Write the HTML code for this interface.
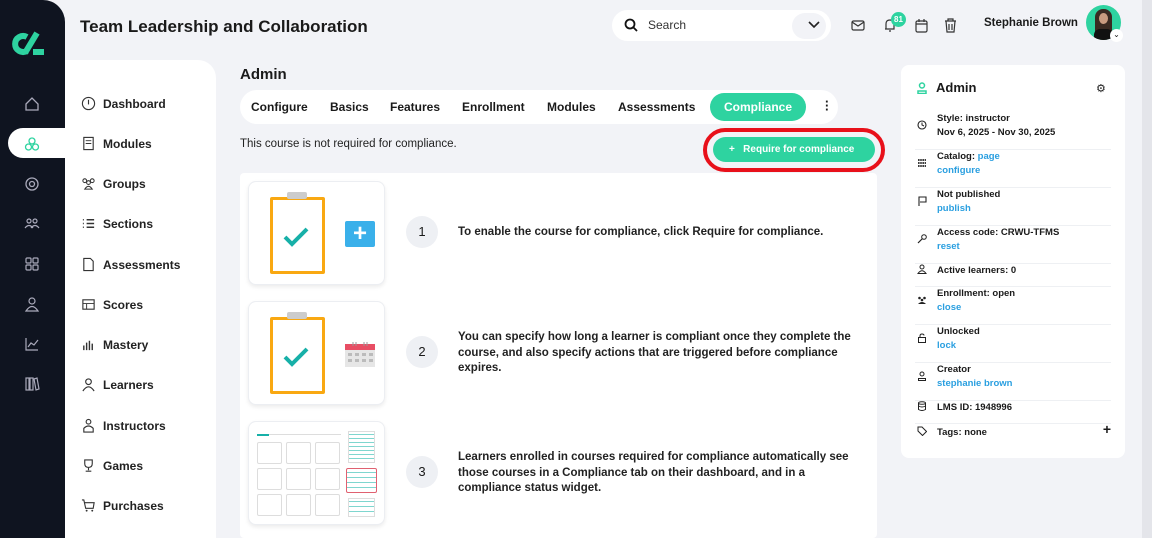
<!DOCTYPE html>
<html><head><meta charset="utf-8"><style>
*{box-sizing:border-box;margin:0;padding:0}
body{width:1152px;height:538px;overflow:hidden;background:#f2f3f7;font-family:"Liberation Sans",sans-serif;color:#1a1a1a;position:relative}
.abs{position:absolute}
.side{left:0;top:0;width:65px;height:538px;background:#0f1420;border-top-right-radius:22px}
.ic{position:absolute;left:24px;width:16px;height:16px}
.nav2{left:65px;top:60px;width:151px;height:478px;background:#fff;border-top-right-radius:18px}
.nav2 div{position:absolute;left:16px;font-size:12px;font-weight:bold;color:#222;display:flex;align-items:center;gap:7px}
.nav2 svg{width:15px;height:15px}
.tabs{left:240px;top:90px;width:598px;height:34px;background:#fff;border-radius:17px}
.tabs span{position:absolute;top:10px;font-size:12px;font-weight:bold}
.card{position:absolute;left:248px;width:137px;height:104px;background:#fff;border:1px solid #eceef2;border-radius:8px;box-shadow:0 2px 4px rgba(0,0,0,.08)}
.num{position:absolute;left:406px;width:32px;height:32px;border-radius:50%;background:#eef0f4;font-size:13px;text-align:center;line-height:32px}
.st{position:absolute;left:458px;font-size:11.5px;font-weight:bold;line-height:15.5px;color:#222;width:400px}
.rp{left:901px;top:65px;width:224px;height:393px;background:#fff;border-radius:8px}
.row{position:absolute;left:14px;width:196px;border-bottom:1px solid #eef0f3;font-size:9.5px;font-weight:bold;line-height:14px}
.row .t{position:absolute;left:22px}
.row svg{position:absolute;left:2px;width:10px;height:10px}
a{color:#2a9fe0;text-decoration:none}
</style></head><body>
<div class="abs side">
<svg class="abs" style="left:12px;top:31px" width="34" height="26" viewBox="0 0 34 26"><path d="M15 6 A8 8 0 1 0 15 20" fill="none" stroke="#2ed3a0" stroke-width="6"/><path d="M25 2 L13 22" stroke="#2ed3a0" stroke-width="6"/><rect x="21" y="18" width="11" height="6" fill="#2ed3a0"/></svg>
<svg class="ic" style="top:96px" viewBox="0 0 16 16"><path d="M2 8 L8 2 L14 8 V14 H2Z" fill="none" stroke="#aab" stroke-width="1.3"/></svg>
<div class="abs" style="left:8px;top:128px;width:57px;height:30px;background:#fff;border-radius:15px 0 0 15px"></div>
<svg class="ic" style="top:136px" viewBox="0 0 16 16"><g fill="none" stroke="#2ed3a0" stroke-width="1.3"><circle cx="8" cy="5" r="3"/><circle cx="4.5" cy="11" r="3"/><circle cx="11.5" cy="11" r="3"/></g></svg>
<svg class="ic" style="top:176px" viewBox="0 0 16 16"><circle cx="8" cy="8" r="6" fill="none" stroke="#aab" stroke-width="1.3"/><circle cx="8" cy="8" r="2.5" fill="none" stroke="#aab" stroke-width="1.3"/></svg>
<svg class="ic" style="top:216px" viewBox="0 0 16 16"><g fill="none" stroke="#aab" stroke-width="1.2"><circle cx="5" cy="5" r="2"/><circle cx="11" cy="5" r="2"/><path d="M1 12 Q5 7 9 12 M7 12 Q11 7 15 12"/></g></svg>
<svg class="ic" style="top:256px" viewBox="0 0 16 16"><g fill="none" stroke="#aab" stroke-width="1.2"><rect x="2" y="2" width="5" height="5" rx="1"/><rect x="9" y="2" width="5" height="5" rx="1"/><rect x="2" y="9" width="5" height="5" rx="1"/><rect x="9" y="9" width="5" height="5" rx="1"/></g></svg>
<svg class="ic" style="top:296px" viewBox="0 0 16 16"><g fill="none" stroke="#aab" stroke-width="1.2"><circle cx="8" cy="5" r="3"/><path d="M2 15 Q8 6 14 15Z"/></g></svg>
<svg class="ic" style="top:336px" viewBox="0 0 16 16"><path d="M2 2 V14 H14 M4 11 L7 7 L10 9 L14 4" fill="none" stroke="#aab" stroke-width="1.2"/></svg>
<svg class="ic" style="top:376px" viewBox="0 0 16 16"><g fill="none" stroke="#aab" stroke-width="1.2"><rect x="2" y="2" width="3" height="12"/><rect x="6" y="2" width="3" height="12"/><path d="M10 3 L13 2 L15 13 L12 14Z"/></g></svg>
</div>
<div class="abs" style="left:80px;top:17px;font-size:17px;font-weight:bold">Team Leadership and Collaboration</div>
<div class="abs nav2">
<div style="top:36px"><svg viewBox="0 0 16 16"><circle cx="8" cy="8" r="6.5" fill="none" stroke="#333" stroke-width="1.2"/><path d="M8 4V9" stroke="#333" stroke-width="1.2"/></svg>Dashboard</div>
<div style="top:76px"><svg viewBox="0 0 16 16"><rect x="3" y="1.5" width="10" height="13" fill="none" stroke="#333" stroke-width="1.2"/><path d="M5 5H11M5 8H11" stroke="#333"/></svg>Modules</div>
<div style="top:116px"><svg viewBox="0 0 16 16"><g fill="none" stroke="#333" stroke-width="1.1"><circle cx="4" cy="5" r="2"/><circle cx="12" cy="5" r="2"/><circle cx="8" cy="7" r="2"/><path d="M4 14Q8 8 12 14Z"/></g></svg>Groups</div>
<div style="top:156px"><svg viewBox="0 0 16 16"><path d="M2 4H3M2 8H3M2 12H3M6 4H14M6 8H14M6 12H14" stroke="#333" stroke-width="1.5"/></svg>Sections</div>
<div style="top:197px"><svg viewBox="0 0 16 16"><path d="M3 1.5H10L13 4.5V14.5H3Z" fill="none" stroke="#333" stroke-width="1.2"/></svg>Assessments</div>
<div style="top:237px"><svg viewBox="0 0 16 16"><rect x="2" y="3" width="12" height="10" fill="none" stroke="#333" stroke-width="1.2"/><path d="M2 7H14M6 7V13" stroke="#333"/></svg>Scores</div>
<div style="top:277px"><svg viewBox="0 0 16 16"><path d="M3 14V9M6 14V6M9 14V4M12 14V7" stroke="#333" stroke-width="1.5"/></svg>Mastery</div>
<div style="top:317px"><svg viewBox="0 0 16 16"><g fill="none" stroke="#333" stroke-width="1.2"><circle cx="8" cy="5" r="3"/><path d="M2 15Q8 6 14 15"/></g></svg>Learners</div>
<div style="top:358px"><svg viewBox="0 0 16 16"><g fill="none" stroke="#333" stroke-width="1.2"><circle cx="8" cy="4" r="2.5"/><path d="M3 15V11Q8 6 13 11V15Z"/></g></svg>Instructors</div>
<div style="top:398px"><svg viewBox="0 0 16 16"><path d="M4 2H12V6Q12 10 8 10Q4 10 4 6ZM8 10V13M5 14H11" fill="none" stroke="#333" stroke-width="1.2"/></svg>Games</div>
<div style="top:438px"><svg viewBox="0 0 16 16"><path d="M1 2H3L5 11H13L14 5H4" fill="none" stroke="#333" stroke-width="1.2"/><circle cx="6" cy="13.5" r="1" fill="#333"/><circle cx="12" cy="13.5" r="1" fill="#333"/></svg>Purchases</div>
</div>
<div class="abs" style="left:612px;top:10px;width:219px;height:31px;background:#fff;border-radius:16px"></div>
<svg class="abs" style="left:624px;top:18px" width="14" height="14" viewBox="0 0 14 14"><circle cx="6" cy="6" r="4.5" fill="none" stroke="#111" stroke-width="1.8"/><path d="M9.5 9.5L13 13" stroke="#111" stroke-width="1.8"/></svg>
<div class="abs" style="left:648px;top:18px;font-size:12px;color:#333">Search</div>
<div class="abs" style="left:792px;top:13px;width:34px;height:26px;border-radius:13px;background:#f2f3f7"></div>
<svg class="abs" style="left:808px;top:21px" width="12" height="8" viewBox="0 0 12 8"><path d="M1 1L6 6L11 1" fill="none" stroke="#222" stroke-width="1.6"/></svg>
<svg class="abs" style="left:851px;top:20px" width="14" height="11" viewBox="0 0 14 11"><rect x="1" y="1" width="12" height="9" rx="1.5" fill="none" stroke="#333" stroke-width="1.2"/><path d="M1 2L7 6L13 2" fill="none" stroke="#333" stroke-width="1.2"/></svg>
<svg class="abs" style="left:883px;top:17px" width="14" height="16" viewBox="0 0 14 16"><path d="M3 12V7Q3 3 7 3Q11 3 11 7V12H2M6 14H8" fill="none" stroke="#333" stroke-width="1.2"/></svg>
<div class="abs" style="left:891px;top:12px;width:15px;height:15px;border-radius:50%;background:#2ed3a0;color:#fff;font-size:8px;font-weight:bold;text-align:center;line-height:15px">81</div>
<svg class="abs" style="left:915px;top:18px" width="13" height="15" viewBox="0 0 13 15"><rect x="1" y="3" width="11" height="11" rx="1.5" fill="none" stroke="#333" stroke-width="1.2"/><path d="M1 6H12M4 1V4M9 1V4" stroke="#333" stroke-width="1.2"/></svg>
<svg class="abs" style="left:944px;top:18px" width="13" height="15" viewBox="0 0 13 15"><path d="M1 3H12M4 3V1H9V3M2 3L3 14H10L11 3M5 6V12M8 6V12" fill="none" stroke="#333" stroke-width="1.2"/></svg>
<div class="abs" style="left:984px;top:17px;font-size:11.5px;font-weight:bold">Stephanie Brown</div>
<div class="abs" style="left:1086px;top:5px;width:35px;height:35px;border-radius:50%;background:#2ed3a0;overflow:hidden"><div style="position:absolute;left:9px;top:4px;width:17px;height:31px;background:#3a2a22;border-radius:8px 8px 2px 2px"></div><div style="position:absolute;left:13px;top:8px;width:9px;height:11px;background:#c99b80;border-radius:50%"></div><div style="position:absolute;left:8px;top:24px;width:19px;height:12px;background:#111;border-radius:6px 6px 0 0"></div></div>
<div class="abs" style="left:1110px;top:29px;width:13px;height:13px;border-radius:50%;background:#fff;font-size:8px;text-align:center;line-height:12px">⌄</div>
<div class="abs" style="left:1142px;top:0;width:10px;height:538px;background:#e4e5ea"></div>

<div class="abs" style="left:240px;top:66px;font-size:15px;font-weight:bold">Admin</div>
<div class="abs tabs">
<span style="left:11px">Configure</span><span style="left:90px">Basics</span><span style="left:150px">Features</span><span style="left:222px">Enrollment</span><span style="left:307px">Modules</span><span style="left:378px">Assessments</span>
<div style="position:absolute;left:470px;top:3px;width:96px;height:28px;border-radius:14px;background:#2ed3a0;color:#fff;font-size:12px;font-weight:bold;text-align:center;line-height:28px">Compliance</div>
</div>
<div class="abs" style="left:825px;top:100px;font-size:13px;font-weight:bold;line-height:4px">·<br>·<br>·</div>
<div class="abs" style="left:240px;top:138px;font-size:11.5px;color:#222">This course is not required for compliance.</div>
<div class="abs" style="left:703px;top:128px;width:182px;height:44px;border:4px solid #e8101a;border-radius:22px"></div>
<div class="abs" style="left:713px;top:137px;width:162px;height:25px;border-radius:13px;background:#2ed3a0;color:#fff;font-size:10px;font-weight:bold;line-height:25px;padding-left:16px">+&nbsp;&nbsp; Require for compliance</div>

<div class="abs" style="left:240px;top:173px;width:637px;height:365px;background:#fff;border-radius:4px"></div>
<div class="card" style="top:181px"><div style="position:absolute;left:21px;top:15px;width:55px;height:77px;border:3px solid #f9a811;border-radius:2px"></div><div style="position:absolute;left:38px;top:10px;width:20px;height:7px;background:#ccc;border-radius:2px"></div><svg style="position:absolute;left:34px;top:45px" width="26" height="20" viewBox="0 0 26 20"><path d="M2 10L9 17L24 2" fill="none" stroke="#17b0a8" stroke-width="4"/></svg><div style="position:absolute;left:96px;top:39px;width:30px;height:26px;background:#3ab0ea;border-radius:2px;color:#fff;font-size:24px;font-weight:bold;text-align:center;line-height:26px">+</div></div>
<div class="card" style="top:301px"><div style="position:absolute;left:21px;top:15px;width:55px;height:77px;border:3px solid #f9a811;border-radius:2px"></div><div style="position:absolute;left:38px;top:10px;width:20px;height:7px;background:#ccc;border-radius:2px"></div><svg style="position:absolute;left:34px;top:45px" width="26" height="20" viewBox="0 0 26 20"><path d="M2 10L9 17L24 2" fill="none" stroke="#17b0a8" stroke-width="4"/></svg>
<svg style="position:absolute;left:96px;top:39px" width="30" height="26" viewBox="0 0 30 26"><rect x="0" y="3" width="30" height="23" fill="#e6e6e6"/><rect x="0" y="3" width="30" height="6" fill="#e84e64"/><path d="M8 1V5M22 1V5M11 1V5M19 1V5" stroke="#999"/><g fill="#bbb"><rect x="3" y="12" width="4" height="3"/><rect x="10" y="12" width="4" height="3"/><rect x="17" y="12" width="4" height="3"/><rect x="24" y="12" width="4" height="3"/><rect x="3" y="18" width="4" height="3"/><rect x="10" y="18" width="4" height="3"/><rect x="17" y="18" width="4" height="3"/><rect x="24" y="18" width="4" height="3"/></g></svg></div>
<div class="card" style="top:421px"><div style="position:absolute;left:8px;top:12px;width:84px;height:1px;background:#ddd"></div><div style="position:absolute;left:8px;top:12px;width:12px;height:2px;background:#17b0a8"></div>
<div style="position:absolute;left:8px;top:20px;display:grid;grid-template-columns:25px 25px 25px;gap:4px"><i style="height:22px;border:1px solid #ddd;border-radius:2px"></i><i style="height:22px;border:1px solid #ddd;border-radius:2px"></i><i style="height:22px;border:1px solid #ddd;border-radius:2px"></i><i style="height:22px;border:1px solid #ddd;border-radius:2px"></i><i style="height:22px;border:1px solid #ddd;border-radius:2px"></i><i style="height:22px;border:1px solid #ddd;border-radius:2px"></i><i style="height:22px;border:1px solid #ddd;border-radius:2px"></i><i style="height:22px;border:1px solid #ddd;border-radius:2px"></i><i style="height:22px;border:1px solid #ddd;border-radius:2px"></i></div>
<div style="position:absolute;left:99px;top:9px;width:27px;height:32px;border:1px solid #ddd;background:repeating-linear-gradient(0deg,#fff 0 3px,#7fd6cf 3px 4px)"></div>
<div style="position:absolute;left:97px;top:46px;width:31px;height:25px;border:1px solid #e06070;border-radius:2px;background:repeating-linear-gradient(0deg,#fff 0 4px,#7fd6cf 4px 5px)"></div>
<div style="position:absolute;left:99px;top:76px;width:27px;height:19px;border:1px solid #ddd;background:repeating-linear-gradient(0deg,#fff 0 4px,#7fd6cf 4px 5px)"></div></div>
<div class="num" style="top:216px">1</div><div class="num" style="top:336px">2</div><div class="num" style="top:456px">3</div>
<div class="st" style="top:225px">To enable the course for compliance, click Require for compliance.</div>
<div class="st" style="top:330px">You can specify how long a learner is compliant once they complete the course, and also specify actions that are triggered before compliance expires.</div>
<div class="st" style="top:450px">Learners enrolled in courses required for compliance automatically see those courses in a Compliance tab on their dashboard, and in a compliance status widget.</div>

<div class="abs rp">
<svg style="position:absolute;left:16px;top:17px" width="10" height="12" viewBox="0 0 10 12"><circle cx="5" cy="3.5" r="2.5" fill="none" stroke="#2ed3a0" stroke-width="1.5"/><path d="M1 11.5V9H9V11.5Z" fill="none" stroke="#2ed3a0" stroke-width="1.5"/></svg>
<div style="position:absolute;left:35px;top:15px;font-size:13px;font-weight:bold">Admin</div>
<div style="position:absolute;left:195px;top:17px;font-size:11px">⚙</div>
<div class="row" style="top:47px;height:38px"><svg style="top:8px" viewBox="0 0 10 10"><circle cx="5" cy="5" r="4" fill="none" stroke="#222" stroke-width="1.1"/><path d="M5 2.5V5L7 6" fill="none" stroke="#222"/></svg><div class="t">Style: instructor<br>Nov 6, 2025 - Nov 30, 2025</div></div>
<div class="row" style="top:85px;height:38px"><svg style="top:8px" viewBox="0 0 10 10"><path d="M1 2H9M1 5H9M1 8H9" stroke="#222" stroke-width="1.8" stroke-dasharray="1.6 .6"/></svg><div class="t" style="top:0">Catalog: <a>page</a><br><a>configure</a></div></div>
<div class="row" style="top:123px;height:38px"><svg style="top:8px" viewBox="0 0 10 10"><path d="M2 10V1H9V6H3" fill="none" stroke="#222" stroke-width="1.1"/></svg><div class="t">Not published<br><a>publish</a></div></div>
<div class="row" style="top:161px;height:38px"><svg style="top:8px" viewBox="0 0 10 10"><circle cx="7" cy="3" r="2.3" fill="none" stroke="#222"/><path d="M5.5 4.5L1 9" stroke="#222" stroke-width="1.2"/></svg><div class="t">Access code: CRWU-TFMS<br><a>reset</a></div></div>
<div class="row" style="top:199px;height:23px"><svg style="top:0" viewBox="0 0 10 10"><circle cx="5" cy="3" r="2" fill="none" stroke="#222"/><path d="M1 9.5Q5 4 9 9.5Z" fill="none" stroke="#222"/></svg><div class="t" style="top:0">Active learners: 0</div></div>
<div class="row" style="top:222px;height:38px"><svg style="top:8px" viewBox="0 0 10 10"><circle cx="2.5" cy="3" r="1.3" fill="#222"/><circle cx="7.5" cy="3" r="1.3" fill="#222"/><circle cx="5" cy="5" r="1.3" fill="#222"/><path d="M1 9Q5 5 9 9Z" fill="#222"/></svg><div class="t">Enrollment: open<br><a>close</a></div></div>
<div class="row" style="top:260px;height:38px"><svg style="top:8px" viewBox="0 0 10 10"><rect x="1.5" y="4.5" width="7" height="5" fill="none" stroke="#222"/><path d="M3 4.5V3Q3 1 5 1Q7 1 7 2.5" fill="none" stroke="#222"/></svg><div class="t">Unlocked<br><a>lock</a></div></div>
<div class="row" style="top:298px;height:38px"><svg style="top:8px" viewBox="0 0 10 10"><circle cx="5" cy="3" r="2" fill="none" stroke="#222"/><path d="M1.5 9.5V7.5H8.5V9.5Z" fill="none" stroke="#222"/></svg><div class="t">Creator<br><a>stephanie brown</a></div></div>
<div class="row" style="top:336px;height:23px"><svg style="top:0" viewBox="0 0 10 10"><ellipse cx="5" cy="2" rx="3.5" ry="1.3" fill="none" stroke="#222"/><path d="M1.5 2V8.5Q5 10.5 8.5 8.5V2M1.5 5Q5 7 8.5 5" fill="none" stroke="#222"/></svg><div class="t" style="top:0">LMS ID: 1948996</div></div>
<div class="row" style="top:360px;height:20px;border:0"><svg style="top:1px" viewBox="0 0 10 10"><path d="M1 1H5L9.5 5.5L5.5 9.5L1 5Z" fill="none" stroke="#222"/></svg><div class="t" style="top:1px">Tags: none</div><div style="position:absolute;right:0;top:-3px;font-size:14px">+</div></div>
</div>
</body></html>
